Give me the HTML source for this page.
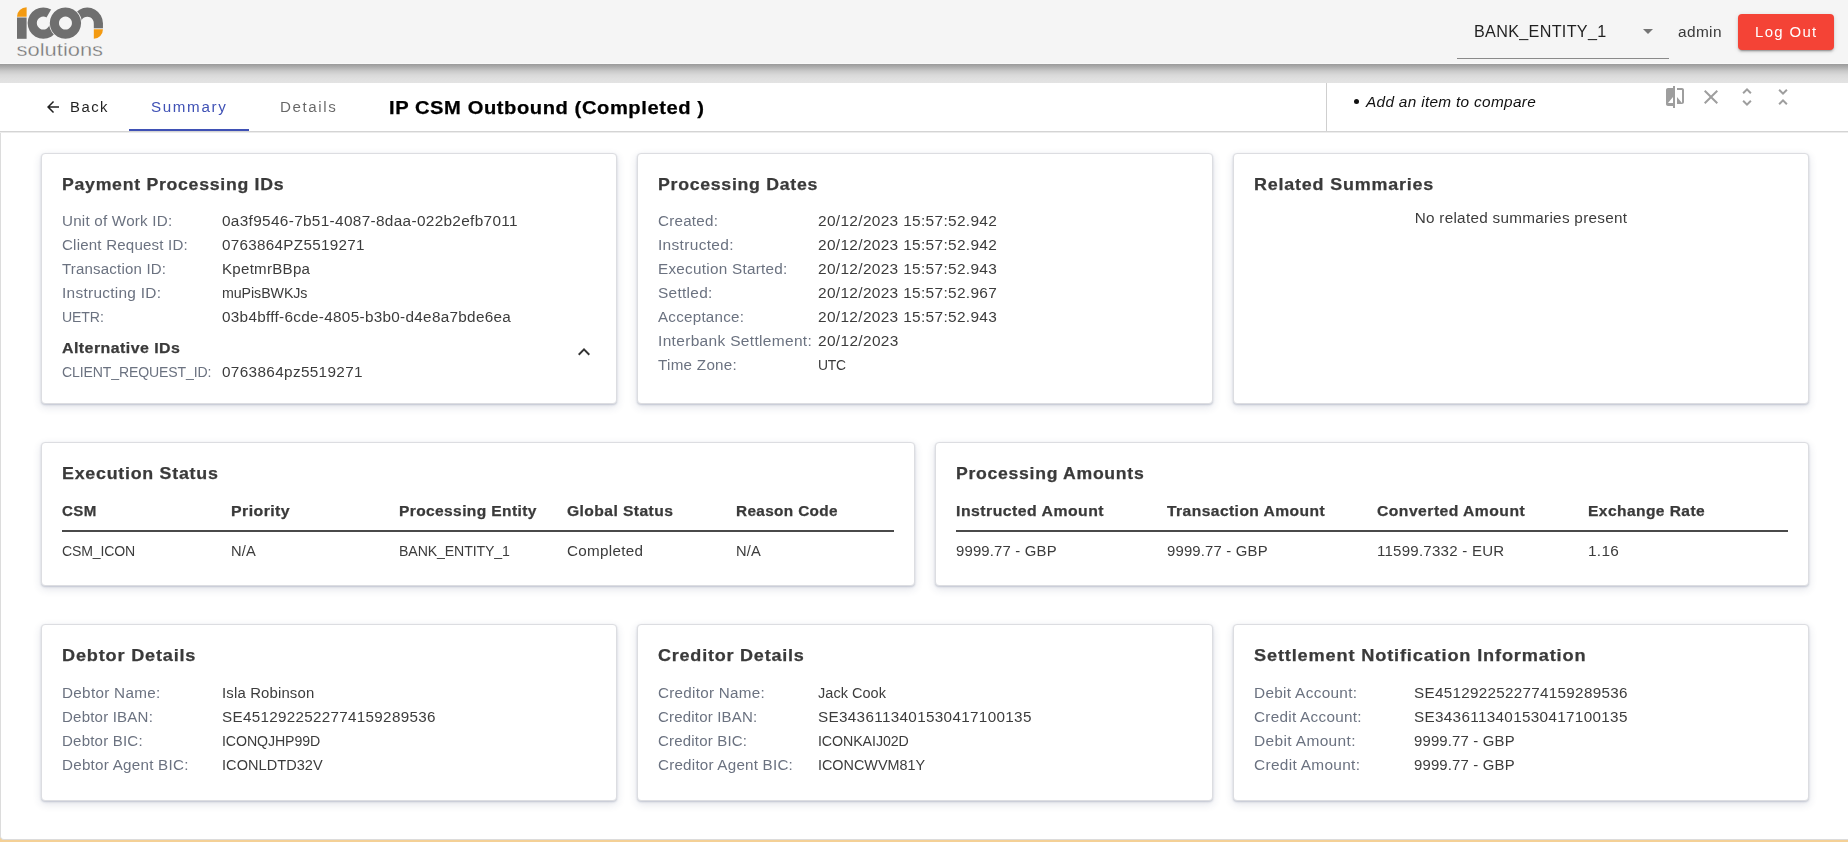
<!DOCTYPE html>
<html><head><meta charset="utf-8"><title>IP CSM Outbound</title>
<style>
html,body{margin:0;padding:0;}
body{width:1848px;height:842px;overflow:hidden;position:relative;background:#f4d096;font-family:"Liberation Sans", sans-serif;}
.abs{position:absolute;}
.t{position:absolute;white-space:pre;}
.card{position:absolute;box-sizing:border-box;background:#fff;border:1px solid #dcdde1;border-radius:4px;box-shadow:0 1px 2px rgba(45,60,100,0.22),0 3px 8px rgba(45,60,100,0.14);}
svg{position:absolute;display:block;}
</style></head><body>
<!-- main panel -->
<div class="abs" style="left:0;top:131px;width:1860px;height:709px;background:#fff;border-left:1px solid #dcdcdc;border-bottom:1px solid #dcdcdc;border-radius:0 0 0 4px;box-sizing:border-box;"></div>
<!-- header -->
<div class="abs" style="left:0;top:0;width:1848px;height:64px;background:#f5f5f5;"></div>
<div class="abs" style="left:0;top:63px;width:1848px;height:1px;background:#f9f9f9;"></div>
<div class="abs" style="left:0;top:64px;width:1848px;height:19px;background:linear-gradient(#9a9a9a 0px,#adadad 3px,#c9c9c9 7px,#d9d9d9 11px,#e0e0e0 15px,#e3e3e3 19px);"></div>
<!-- tab bar -->
<div class="abs" style="left:0;top:83px;width:1848px;height:48px;background:#fff;border-bottom:1px solid #d4d4d4;"></div>
<div class="abs" style="left:0;top:132px;width:1848px;height:1px;background:#ececec;"></div>
<div class="abs" style="left:129px;top:129px;width:120px;height:2px;background:#3f51b5;"></div>
<div class="abs" style="left:1326px;top:83px;width:1px;height:48px;background:#cfcfcf;"></div>
<div class="abs" style="left:1354px;top:99px;width:5px;height:5px;border-radius:50%;background:#111;"></div>

<!-- logo -->
<svg style="left:0;top:0" width="120" height="64" viewBox="0 0 120 64">
  <defs>
    <mask id="mc" maskUnits="userSpaceOnUse" x="0" y="0" width="120" height="64">
      <rect x="0" y="0" width="120" height="64" fill="#fff"/>
      <circle cx="65.45" cy="23.1" r="16.35" fill="#000"/>
      <path d="M43.3,23.1 L61.3,-8.1 L90,-8.1 L90,23.1 Z" fill="#000"/>
    </mask>
    <mask id="mn" maskUnits="userSpaceOnUse" x="0" y="0" width="120" height="64">
      <rect x="0" y="0" width="120" height="64" fill="#fff"/>
      <circle cx="65.45" cy="23.1" r="16.5" fill="#000"/>
      <rect x="60" y="23.2" width="60" height="40" fill="#000"/>
    </mask>
  </defs>
  <g fill="#6f6f6f">
    <rect x="17" y="17.5" width="9.6" height="21.3"/>
    <path mask="url(#mc)" fill-rule="evenodd" d="M43.3,7.45 A15.65,15.65 0 1,1 43.29,7.45 Z M43.3,16.6 A6.5,6.5 0 1,0 43.31,16.6 Z"/>
    <path fill-rule="evenodd" d="M65.45,7.45 A15.65,15.65 0 1,1 65.44,7.45 Z M65.45,16.6 A6.5,6.5 0 1,0 65.46,16.6 Z"/>
    <path mask="url(#mn)" fill-rule="evenodd" d="M87.3,7.55 A15.65,15.65 0 1,1 87.29,7.55 Z M87.3,16.7 A6.5,6.5 0 1,0 87.31,16.7 Z"/>
    <rect x="93.8" y="23" width="9.15" height="5.3"/>
  </g>
  <path fill="#f39a11" d="M26.6,7.35 L26.6,16.65 L17,16.65 A9.6,9.3 0 0,1 26.6,7.35 Z"/>
  <path fill="#f39a11" d="M93.8,29.3 L102.95,29.3 A9.15,9.4 0 0,1 93.8,38.7 Z"/>
  <text x="16.6" y="56.2" font-family="Liberation Sans, sans-serif" font-size="18.2" fill="#767676" stroke="#f5f5f5" stroke-width="0.3" textLength="86.5" lengthAdjust="spacingAndGlyphs">solutions</text>
</svg>

<!-- select underline + arrow -->
<div class="abs" style="left:1457px;top:58px;width:212px;height:1px;background:#8a8a8a;"></div>
<svg style="left:1643px;top:29px" width="10" height="5" viewBox="0 0 10 5"><path d="M0 0L5 5L10 0Z" fill="#757575"/></svg>
<!-- logout button -->
<div class="abs" style="left:1738px;top:14px;width:96px;height:36px;background:#f44336;border-radius:4px;box-shadow:0 3px 1px -2px rgba(0,0,0,.2),0 2px 2px 0 rgba(0,0,0,.14),0 1px 5px 0 rgba(0,0,0,.12);"></div>

<!-- back arrow -->
<svg style="left:44px;top:98px" width="18" height="18" viewBox="0 0 24 24"><path d="M20 11H7.83l5.59-5.59L12 4l-8 8 8 8 1.41-1.41L7.83 13H20v-2z" fill="rgba(0,0,0,0.87)"/></svg>

<!-- compare toolbar icons -->
<svg style="left:1663px;top:85px" width="24" height="24" viewBox="0 0 24 24"><path fill="#9e9e9e" d="M10 3H5c-1.11 0-2 .89-2 2v14c0 1.1.89 2 2 2h5v2h2V1h-2v2zm0 15H5l5-6v6zm9-15h-5v2h5v13l-5-6v7h5c1.1 0 2-.9 2-2V5c0-1.1-.9-2-2-2z"/></svg>
<svg style="left:1699px;top:85px" width="24" height="24" viewBox="0 0 24 24"><path fill="#9e9e9e" d="M19 6.41L17.59 5 12 10.59 6.41 5 5 6.41 10.59 12 5 17.59 6.41 19 12 13.41 17.59 19 19 17.59 13.41 12z"/></svg>
<svg style="left:1735px;top:85px" width="24" height="24" viewBox="0 0 24 24"><path fill="#9e9e9e" d="M12 5.83L15.17 9l1.41-1.41L12 3 7.41 7.59 8.83 9 12 5.83zm0 12.34L8.83 15l-1.41 1.41L12 21l4.59-4.59L15.17 15 12 18.17z"/></svg>
<svg style="left:1771px;top:85px" width="24" height="24" viewBox="0 0 24 24"><path fill="#9e9e9e" d="M7.41 18.59L8.83 20 12 16.83 15.17 20l1.41-1.41L12 14l-4.59 4.59zm9.18-13.18L15.17 4 12 7.17 8.83 4 7.41 5.41 12 10l4.59-4.59z"/></svg>

<!-- cards -->
<div class="card" style="left:41px;top:153px;width:576px;height:251px;"></div>
<div class="card" style="left:637px;top:153px;width:576px;height:251px;"></div>
<div class="card" style="left:1233px;top:153px;width:576px;height:251px;"></div>
<div class="card" style="left:41px;top:442px;width:874px;height:144px;"></div>
<div class="card" style="left:935px;top:442px;width:874px;height:144px;"></div>
<div class="card" style="left:41px;top:624px;width:576px;height:177px;"></div>
<div class="card" style="left:637px;top:624px;width:576px;height:177px;"></div>
<div class="card" style="left:1233px;top:624px;width:576px;height:177px;"></div>

<!-- table header lines -->
<div class="abs" style="left:62px;top:530px;width:832px;height:2px;background:#4a4a4a;"></div>
<div class="abs" style="left:956px;top:530px;width:832px;height:2px;background:#4a4a4a;"></div>

<!-- expand less chevron -->
<svg style="left:572px;top:340px" width="24" height="24" viewBox="0 0 24 24"><path fill="#333" d="M12 8l-6 6 1.41 1.41L12 10.83l4.59 4.58L18 14z"/></svg>

<div class="t" style="left:1474.00px;top:23.35px;font-size:16.48px;line-height:16.48px;color:rgba(0,0,0,0.87);letter-spacing:0.318px;transform:scaleX(0.9816);transform-origin:0 0">BANK_ENTITY_1</div>
<div class="t" style="left:1678.00px;top:24.59px;font-size:14.42px;line-height:14.42px;color:#3a3a3a;letter-spacing:0.346px;transform:scaleX(1.0707);transform-origin:0 0">admin</div>
<div class="t" style="left:1755.30px;top:24.99px;font-size:14.42px;line-height:14.42px;color:#ffffff;letter-spacing:1.297px;transform:scaleX(1.0364);transform-origin:0 0">Log Out</div>
<div class="t" style="left:69.80px;top:99.59px;font-size:14.42px;line-height:14.42px;color:rgba(0,0,0,0.87);letter-spacing:1.441px;transform:scaleX(1.0319);transform-origin:0 0">Back</div>
<div class="t" style="left:151.40px;top:99.59px;font-size:14.42px;line-height:14.42px;color:#3f51b5;letter-spacing:1.577px;transform:scaleX(1.0513);transform-origin:0 0">Summary</div>
<div class="t" style="left:279.90px;top:99.59px;font-size:14.42px;line-height:14.42px;color:rgba(0,0,0,0.6);letter-spacing:1.495px;transform:scaleX(1.0511);transform-origin:0 0">Details</div>
<div class="t" style="left:389.00px;top:98.71px;font-size:18.54px;line-height:18.54px;color:#000;font-weight:bold;-webkit-text-stroke:0.25px #000;letter-spacing:0.526px;transform:scaleX(1.0872);transform-origin:0 0">IP CSM Outbound (Completed )</div>
<div class="t" style="left:1365.70px;top:94.79px;font-size:14.42px;line-height:14.42px;color:#111;font-style:italic;letter-spacing:0.291px;transform:scaleX(1.0670);transform-origin:0 0">Add an item to compare</div>
<div class="t" style="left:62.00px;top:176.05px;font-size:16.48px;line-height:16.48px;color:#3a3a3a;font-weight:bold;-webkit-text-stroke:0.25px #3a3a3a;letter-spacing:0.666px;transform:scaleX(1.0746);transform-origin:0 0">Payment Processing IDs</div>
<div class="t" style="left:62.00px;top:213.59px;font-size:14.42px;line-height:14.42px;color:#6b7280;letter-spacing:0.214px;transform:scaleX(1.0533);transform-origin:0 0">Unit of Work ID:</div>
<div class="t" style="left:222.00px;top:213.59px;font-size:14.42px;line-height:14.42px;color:#3c3c3c;letter-spacing:0.307px;transform:scaleX(1.0662);transform-origin:0 0">0a3f9546-7b51-4087-8daa-022b2efb7011</div>
<div class="t" style="left:62.00px;top:237.59px;font-size:14.42px;line-height:14.42px;color:#6b7280;letter-spacing:0.192px;transform:scaleX(1.0464);transform-origin:0 0">Client Request ID:</div>
<div class="t" style="left:222.00px;top:237.59px;font-size:14.42px;line-height:14.42px;color:#3c3c3c;letter-spacing:0.288px;transform:scaleX(1.0559);transform-origin:0 0">0763864PZ5519271</div>
<div class="t" style="left:62.00px;top:261.59px;font-size:14.42px;line-height:14.42px;color:#6b7280;letter-spacing:0.179px;transform:scaleX(1.0433);transform-origin:0 0">Transaction ID:</div>
<div class="t" style="left:222.00px;top:261.59px;font-size:14.42px;line-height:14.42px;color:#3c3c3c;letter-spacing:0.250px;transform:scaleX(1.0482);transform-origin:0 0">KpetmrBBpa</div>
<div class="t" style="left:62.00px;top:285.59px;font-size:14.42px;line-height:14.42px;color:#6b7280;letter-spacing:0.260px;transform:scaleX(1.0706);transform-origin:0 0">Instructing ID:</div>
<div class="t" style="left:222.00px;top:285.59px;font-size:14.42px;line-height:14.42px;color:#3c3c3c;letter-spacing:-0.075px;transform:scaleX(0.9872);transform-origin:0 0">muPisBWKJs</div>
<div class="t" style="left:62.00px;top:309.59px;font-size:14.42px;line-height:14.42px;color:#6b7280;letter-spacing:-0.126px;transform:scaleX(0.9785);transform-origin:0 0">UETR:</div>
<div class="t" style="left:222.00px;top:309.59px;font-size:14.42px;line-height:14.42px;color:#3c3c3c;letter-spacing:0.282px;transform:scaleX(1.0616);transform-origin:0 0">03b4bfff-6cde-4805-b3b0-d4e8a7bde6ea</div>
<div class="t" style="left:62.00px;top:341.19px;font-size:14.42px;line-height:14.42px;color:#3a3a3a;font-weight:bold;-webkit-text-stroke:0.25px #3a3a3a;letter-spacing:0.421px;transform:scaleX(1.1035);transform-origin:0 0">Alternative IDs</div>
<div class="t" style="left:62.00px;top:365.09px;font-size:14.42px;line-height:14.42px;color:#6b7280;letter-spacing:-0.136px;transform:scaleX(0.9769);transform-origin:0 0">CLIENT_REQUEST_ID:</div>
<div class="t" style="left:222.00px;top:365.09px;font-size:14.42px;line-height:14.42px;color:#3c3c3c;letter-spacing:0.318px;transform:scaleX(1.0638);transform-origin:0 0">0763864pz5519271</div>
<div class="t" style="left:658.00px;top:176.05px;font-size:16.48px;line-height:16.48px;color:#3a3a3a;font-weight:bold;-webkit-text-stroke:0.25px #3a3a3a;letter-spacing:0.664px;transform:scaleX(1.0750);transform-origin:0 0">Processing Dates</div>
<div class="t" style="left:658.00px;top:213.59px;font-size:14.42px;line-height:14.42px;color:#6b7280;letter-spacing:0.231px;transform:scaleX(1.0528);transform-origin:0 0">Created:</div>
<div class="t" style="left:818.00px;top:213.59px;font-size:14.42px;line-height:14.42px;color:#3c3c3c;letter-spacing:0.308px;transform:scaleX(1.0710);transform-origin:0 0">20/12/2023 15:57:52.942</div>
<div class="t" style="left:658.00px;top:237.59px;font-size:14.42px;line-height:14.42px;color:#6b7280;letter-spacing:0.289px;transform:scaleX(1.0764);transform-origin:0 0">Instructed:</div>
<div class="t" style="left:818.00px;top:237.59px;font-size:14.42px;line-height:14.42px;color:#3c3c3c;letter-spacing:0.308px;transform:scaleX(1.0710);transform-origin:0 0">20/12/2023 15:57:52.942</div>
<div class="t" style="left:658.00px;top:261.59px;font-size:14.42px;line-height:14.42px;color:#6b7280;letter-spacing:0.248px;transform:scaleX(1.0604);transform-origin:0 0">Execution Started:</div>
<div class="t" style="left:818.00px;top:261.59px;font-size:14.42px;line-height:14.42px;color:#3c3c3c;letter-spacing:0.308px;transform:scaleX(1.0710);transform-origin:0 0">20/12/2023 15:57:52.943</div>
<div class="t" style="left:658.00px;top:285.59px;font-size:14.42px;line-height:14.42px;color:#6b7280;letter-spacing:0.268px;transform:scaleX(1.0704);transform-origin:0 0">Settled:</div>
<div class="t" style="left:818.00px;top:285.59px;font-size:14.42px;line-height:14.42px;color:#3c3c3c;letter-spacing:0.308px;transform:scaleX(1.0710);transform-origin:0 0">20/12/2023 15:57:52.967</div>
<div class="t" style="left:658.00px;top:309.59px;font-size:14.42px;line-height:14.42px;color:#6b7280;letter-spacing:0.239px;transform:scaleX(1.0523);transform-origin:0 0">Acceptance:</div>
<div class="t" style="left:818.00px;top:309.59px;font-size:14.42px;line-height:14.42px;color:#3c3c3c;letter-spacing:0.308px;transform:scaleX(1.0710);transform-origin:0 0">20/12/2023 15:57:52.943</div>
<div class="t" style="left:658.00px;top:333.59px;font-size:14.42px;line-height:14.42px;color:#6b7280;letter-spacing:0.304px;transform:scaleX(1.0751);transform-origin:0 0">Interbank Settlement:</div>
<div class="t" style="left:818.00px;top:333.59px;font-size:14.42px;line-height:14.42px;color:#3c3c3c;letter-spacing:0.321px;transform:scaleX(1.0715);transform-origin:0 0">20/12/2023</div>
<div class="t" style="left:658.00px;top:357.59px;font-size:14.42px;line-height:14.42px;color:#6b7280;letter-spacing:0.256px;transform:scaleX(1.0560);transform-origin:0 0">Time Zone:</div>
<div class="t" style="left:818.00px;top:357.59px;font-size:14.42px;line-height:14.42px;color:#3c3c3c;letter-spacing:-0.255px;transform:scaleX(0.9626);transform-origin:0 0">UTC</div>
<div class="t" style="left:1254.00px;top:176.05px;font-size:16.48px;line-height:16.48px;color:#3a3a3a;font-weight:bold;-webkit-text-stroke:0.25px #3a3a3a;letter-spacing:0.746px;transform:scaleX(1.0875);transform-origin:0 0">Related Summaries</div>
<div class="t" style="left:62.00px;top:464.85px;font-size:16.48px;line-height:16.48px;color:#3a3a3a;font-weight:bold;-webkit-text-stroke:0.25px #3a3a3a;letter-spacing:0.688px;transform:scaleX(1.0828);transform-origin:0 0">Execution Status</div>
<div class="t" style="left:62.00px;top:504.09px;font-size:14.42px;line-height:14.42px;color:#3a3a3a;font-weight:bold;-webkit-text-stroke:0.25px #3a3a3a;letter-spacing:0.324px;transform:scaleX(1.0477);transform-origin:0 0">CSM</div>
<div class="t" style="left:62.00px;top:543.99px;font-size:14.42px;line-height:14.42px;color:#3c3c3c;letter-spacing:-0.149px;transform:scaleX(0.9771);transform-origin:0 0">CSM_ICON</div>
<div class="t" style="left:231.00px;top:504.09px;font-size:14.42px;line-height:14.42px;color:#3a3a3a;font-weight:bold;-webkit-text-stroke:0.25px #3a3a3a;letter-spacing:0.393px;transform:scaleX(1.1032);transform-origin:0 0">Priority</div>
<div class="t" style="left:231.00px;top:543.99px;font-size:14.42px;line-height:14.42px;color:#3c3c3c;letter-spacing:0.100px;transform:scaleX(1.0191);transform-origin:0 0">N/A</div>
<div class="t" style="left:399.00px;top:504.09px;font-size:14.42px;line-height:14.42px;color:#3a3a3a;font-weight:bold;-webkit-text-stroke:0.25px #3a3a3a;letter-spacing:0.350px;transform:scaleX(1.0792);transform-origin:0 0">Processing Entity</div>
<div class="t" style="left:399.00px;top:543.99px;font-size:14.42px;line-height:14.42px;color:#3c3c3c;letter-spacing:-0.114px;transform:scaleX(0.9809);transform-origin:0 0">BANK_ENTITY_1</div>
<div class="t" style="left:567.00px;top:504.09px;font-size:14.42px;line-height:14.42px;color:#3a3a3a;font-weight:bold;-webkit-text-stroke:0.25px #3a3a3a;letter-spacing:0.380px;transform:scaleX(1.0866);transform-origin:0 0">Global Status</div>
<div class="t" style="left:567.00px;top:543.99px;font-size:14.42px;line-height:14.42px;color:#3c3c3c;letter-spacing:0.281px;transform:scaleX(1.0576);transform-origin:0 0">Completed</div>
<div class="t" style="left:736.00px;top:504.09px;font-size:14.42px;line-height:14.42px;color:#3a3a3a;font-weight:bold;-webkit-text-stroke:0.25px #3a3a3a;letter-spacing:0.337px;transform:scaleX(1.0644);transform-origin:0 0">Reason Code</div>
<div class="t" style="left:736.00px;top:543.99px;font-size:14.42px;line-height:14.42px;color:#3c3c3c;letter-spacing:0.100px;transform:scaleX(1.0191);transform-origin:0 0">N/A</div>
<div class="t" style="left:956.00px;top:464.85px;font-size:16.48px;line-height:16.48px;color:#3a3a3a;font-weight:bold;-webkit-text-stroke:0.25px #3a3a3a;letter-spacing:0.661px;transform:scaleX(1.0704);transform-origin:0 0">Processing Amounts</div>
<div class="t" style="left:956.00px;top:504.09px;font-size:14.42px;line-height:14.42px;color:#3a3a3a;font-weight:bold;-webkit-text-stroke:0.25px #3a3a3a;letter-spacing:0.442px;transform:scaleX(1.0969);transform-origin:0 0">Instructed Amount</div>
<div class="t" style="left:956.00px;top:543.99px;font-size:14.42px;line-height:14.42px;color:#3c3c3c;letter-spacing:0.162px;transform:scaleX(1.0342);transform-origin:0 0">9999.77 - GBP</div>
<div class="t" style="left:1166.50px;top:504.09px;font-size:14.42px;line-height:14.42px;color:#3a3a3a;font-weight:bold;-webkit-text-stroke:0.25px #3a3a3a;letter-spacing:0.395px;transform:scaleX(1.0834);transform-origin:0 0">Transaction Amount</div>
<div class="t" style="left:1166.50px;top:543.99px;font-size:14.42px;line-height:14.42px;color:#3c3c3c;letter-spacing:0.162px;transform:scaleX(1.0342);transform-origin:0 0">9999.77 - GBP</div>
<div class="t" style="left:1377.00px;top:504.09px;font-size:14.42px;line-height:14.42px;color:#3a3a3a;font-weight:bold;-webkit-text-stroke:0.25px #3a3a3a;letter-spacing:0.437px;transform:scaleX(1.0884);transform-origin:0 0">Converted Amount</div>
<div class="t" style="left:1377.00px;top:543.99px;font-size:14.42px;line-height:14.42px;color:#3c3c3c;letter-spacing:0.218px;transform:scaleX(1.0463);transform-origin:0 0">11599.7332 - EUR</div>
<div class="t" style="left:1587.50px;top:504.09px;font-size:14.42px;line-height:14.42px;color:#3a3a3a;font-weight:bold;-webkit-text-stroke:0.25px #3a3a3a;letter-spacing:0.393px;transform:scaleX(1.0801);transform-origin:0 0">Exchange Rate</div>
<div class="t" style="left:1587.50px;top:543.99px;font-size:14.42px;line-height:14.42px;color:#3c3c3c;letter-spacing:0.293px;transform:scaleX(1.0669);transform-origin:0 0">1.16</div>
<div class="t" style="left:62.00px;top:647.05px;font-size:16.48px;line-height:16.48px;color:#3a3a3a;font-weight:bold;-webkit-text-stroke:0.25px #3a3a3a;letter-spacing:0.747px;transform:scaleX(1.0996);transform-origin:0 0">Debtor Details</div>
<div class="t" style="left:62.00px;top:685.59px;font-size:14.42px;line-height:14.42px;color:#6b7280;letter-spacing:0.279px;transform:scaleX(1.0594);transform-origin:0 0">Debtor Name:</div>
<div class="t" style="left:222.00px;top:685.59px;font-size:14.42px;line-height:14.42px;color:#3c3c3c;letter-spacing:0.151px;transform:scaleX(1.0350);transform-origin:0 0">Isla Robinson</div>
<div class="t" style="left:62.00px;top:709.59px;font-size:14.42px;line-height:14.42px;color:#6b7280;letter-spacing:0.197px;transform:scaleX(1.0436);transform-origin:0 0">Debtor IBAN:</div>
<div class="t" style="left:222.00px;top:709.59px;font-size:14.42px;line-height:14.42px;color:#3c3c3c;letter-spacing:0.288px;transform:scaleX(1.0559);transform-origin:0 0">SE4512922522774159289536</div>
<div class="t" style="left:62.00px;top:733.59px;font-size:14.42px;line-height:14.42px;color:#6b7280;letter-spacing:0.192px;transform:scaleX(1.0440);transform-origin:0 0">Debtor BIC:</div>
<div class="t" style="left:222.00px;top:733.59px;font-size:14.42px;line-height:14.42px;color:#3c3c3c;letter-spacing:-0.102px;transform:scaleX(0.9836);transform-origin:0 0">ICONQJHP99D</div>
<div class="t" style="left:62.00px;top:757.59px;font-size:14.42px;line-height:14.42px;color:#6b7280;letter-spacing:0.235px;transform:scaleX(1.0544);transform-origin:0 0">Debtor Agent BIC:</div>
<div class="t" style="left:222.00px;top:757.59px;font-size:14.42px;line-height:14.42px;color:#3c3c3c;letter-spacing:0.051px;transform:scaleX(1.0086);transform-origin:0 0">ICONLDTD32V</div>
<div class="t" style="left:658.00px;top:647.05px;font-size:16.48px;line-height:16.48px;color:#3a3a3a;font-weight:bold;-webkit-text-stroke:0.25px #3a3a3a;letter-spacing:0.706px;transform:scaleX(1.0945);transform-origin:0 0">Creditor Details</div>
<div class="t" style="left:658.00px;top:685.59px;font-size:14.42px;line-height:14.42px;color:#6b7280;letter-spacing:0.250px;transform:scaleX(1.0567);transform-origin:0 0">Creditor Name:</div>
<div class="t" style="left:818.00px;top:685.59px;font-size:14.42px;line-height:14.42px;color:#3c3c3c;letter-spacing:0.032px;transform:scaleX(1.0064);transform-origin:0 0">Jack Cook</div>
<div class="t" style="left:658.00px;top:709.59px;font-size:14.42px;line-height:14.42px;color:#6b7280;letter-spacing:0.178px;transform:scaleX(1.0420);transform-origin:0 0">Creditor IBAN:</div>
<div class="t" style="left:818.00px;top:709.59px;font-size:14.42px;line-height:14.42px;color:#3c3c3c;letter-spacing:0.303px;transform:scaleX(1.0595);transform-origin:0 0">SE3436113401530417100135</div>
<div class="t" style="left:658.00px;top:733.59px;font-size:14.42px;line-height:14.42px;color:#6b7280;letter-spacing:0.173px;transform:scaleX(1.0421);transform-origin:0 0">Creditor BIC:</div>
<div class="t" style="left:818.00px;top:733.59px;font-size:14.42px;line-height:14.42px;color:#3c3c3c;letter-spacing:-0.078px;transform:scaleX(0.9864);transform-origin:0 0">ICONKAIJ02D</div>
<div class="t" style="left:658.00px;top:757.59px;font-size:14.42px;line-height:14.42px;color:#6b7280;letter-spacing:0.218px;transform:scaleX(1.0526);transform-origin:0 0">Creditor Agent BIC:</div>
<div class="t" style="left:818.00px;top:757.59px;font-size:14.42px;line-height:14.42px;color:#3c3c3c;letter-spacing:-0.008px;transform:scaleX(0.9988);transform-origin:0 0">ICONCWVM81Y</div>
<div class="t" style="left:1254.00px;top:647.05px;font-size:16.48px;line-height:16.48px;color:#3a3a3a;font-weight:bold;-webkit-text-stroke:0.25px #3a3a3a;letter-spacing:0.759px;transform:scaleX(1.1041);transform-origin:0 0">Settlement Notification Information</div>
<div class="t" style="left:1254.00px;top:685.59px;font-size:14.42px;line-height:14.42px;color:#6b7280;letter-spacing:0.280px;transform:scaleX(1.0675);transform-origin:0 0">Debit Account:</div>
<div class="t" style="left:1414.00px;top:685.59px;font-size:14.42px;line-height:14.42px;color:#3c3c3c;letter-spacing:0.288px;transform:scaleX(1.0559);transform-origin:0 0">SE4512922522774159289536</div>
<div class="t" style="left:1254.00px;top:709.59px;font-size:14.42px;line-height:14.42px;color:#6b7280;letter-spacing:0.253px;transform:scaleX(1.0620);transform-origin:0 0">Credit Account:</div>
<div class="t" style="left:1414.00px;top:709.59px;font-size:14.42px;line-height:14.42px;color:#3c3c3c;letter-spacing:0.303px;transform:scaleX(1.0595);transform-origin:0 0">SE3436113401530417100135</div>
<div class="t" style="left:1254.00px;top:733.59px;font-size:14.42px;line-height:14.42px;color:#6b7280;letter-spacing:0.325px;transform:scaleX(1.0752);transform-origin:0 0">Debit Amount:</div>
<div class="t" style="left:1414.00px;top:733.59px;font-size:14.42px;line-height:14.42px;color:#3c3c3c;letter-spacing:0.162px;transform:scaleX(1.0342);transform-origin:0 0">9999.77 - GBP</div>
<div class="t" style="left:1254.00px;top:757.59px;font-size:14.42px;line-height:14.42px;color:#6b7280;letter-spacing:0.294px;transform:scaleX(1.0693);transform-origin:0 0">Credit Amount:</div>
<div class="t" style="left:1414.00px;top:757.59px;font-size:14.42px;line-height:14.42px;color:#3c3c3c;letter-spacing:0.162px;transform:scaleX(1.0342);transform-origin:0 0">9999.77 - GBP</div>
<div class="t" style="left:1221px;width:600px;text-align:center;top:211.09px;font-size:14.42px;line-height:14.42px;color:#3c3c3c;letter-spacing:0.266px;transform:scaleX(1.0614);transform-origin:50% 0">No related summaries present</div>
</body></html>
